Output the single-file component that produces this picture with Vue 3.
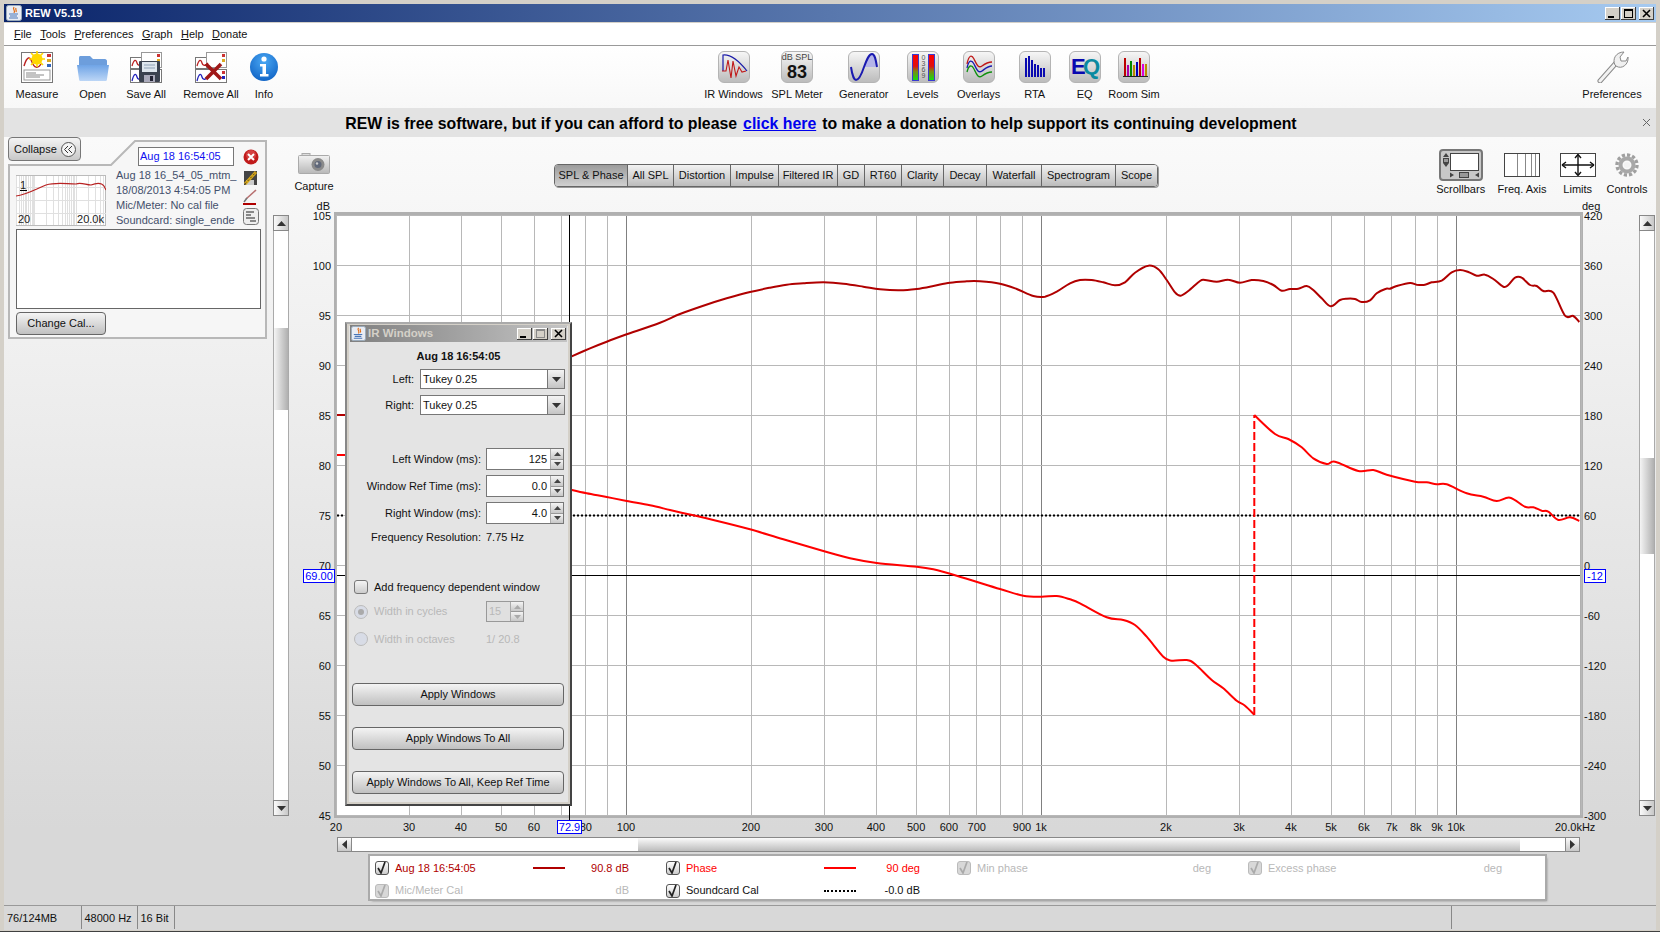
<script setup>
const log10 = Math.log10
const fx = f => 626 + 415 * log10(f / 100)
const snap = v => Math.floor(v + 0.2) + 0.5

const freqs = []
for (const d of [10, 100, 1000, 10000]) {
  for (let i = 1; i <= 9; i++) {
    const f = i * d
    if (f >= 20 && f <= 20000) freqs.push(f)
  }
}
freqs.push(20000)
const vLines = freqs.map(f => ({ x: snap(fx(f)), major: [100, 1000, 10000].includes(f) }))
const xLabels = [
  [20, '20'], [30, '30'], [40, '40'], [50, '50'], [60, '60'], [80, '80'], [100, '100'], [200, '200'], [300, '300'],
  [400, '400'], [500, '500'], [600, '600'], [700, '700'], [900, '900'], [1000, '1k'], [2000, '2k'], [3000, '3k'],
  [4000, '4k'], [5000, '5k'], [6000, '6k'], [7000, '7k'], [8000, '8k'], [9000, '9k'], [10000, '10k']
].map(([f, t]) => ({ x: fx(f), t }))

const yTicks = []
for (let i = 0; i <= 12; i++) {
  yTicks.push({ y: 215 + i * 50, db: 105 - i * 5, deg: 420 - i * 60 })
}

const z9 = (p) => p.map(([a, b]) => [570 + a / 3, 240 + b / 3])
const z10 = (p) => p.map(([a, b]) => [1080 + a / 3, 240 + b / 3])
const spl = z9([[5, 349], [60, 325], [110, 305], [170, 283], [270, 248], [330, 222], [400, 197], [470, 175], [540, 156], [600, 143], [650, 134], [700, 130], [760, 127], [820, 131], [880, 140], [930, 148], [990, 151], [1040, 147], [1090, 138], [1140, 128], [1190, 124], [1230, 124], [1290, 131], [1340, 147], [1390, 168], [1425, 170], [1460, 155], [1500, 130], [1530, 120]]).concat(
  z10([[35, 120], [70, 127], [105, 136], [135, 127], [165, 98], [205, 77], [235, 88], [260, 120], [285, 157], [302, 167], [325, 153], [360, 123], [375, 120], [410, 125], [445, 119], [480, 128], [515, 120], [550, 123], [580, 135], [605, 152], [630, 147], [655, 146], [680, 138], [700, 150], [725, 175], [752, 199], [780, 180], [800, 176], [825, 177], [845, 186], [870, 181], [890, 160], [918, 146], [930, 146], [950, 138], [990, 129], [1010, 134], [1035, 134], [1055, 127], [1085, 122], [1115, 97], [1140, 90], [1165, 96], [1190, 107], [1215, 104], [1240, 117], [1270, 140], [1285, 135], [1305, 113], [1325, 113], [1350, 135], [1370, 138], [1390, 153], [1420, 158], [1455, 227], [1480, 228], [1498, 246]])
)
const ph1 = z9([[5, 750], [50, 760], [110, 771], [170, 783], [240, 796], [300, 810], [370, 826], [430, 840], [540, 868], [640, 898], [760, 933], [840, 955], [920, 969], [1040, 980], [1090, 988], [1160, 1007], [1290, 1047], [1360, 1067], [1415, 1070], [1460, 1068], [1500, 1078]]).concat(
  z10([[0, 1090], [80, 1132], [130, 1140], [165, 1155], [200, 1190], [250, 1250], [275, 1262], [320, 1260], [345, 1272], [395, 1320], [430, 1345], [470, 1382], [495, 1397], [523, 1424]])
)
const ph2 = z10([[523, 525], [585, 582], [625, 597], [665, 622], [700, 655], [740, 672], [765, 665], [835, 693], [880, 690], [920, 704], [1005, 725], [1040, 727], [1070, 733], [1100, 733], [1160, 760], [1210, 770], [1250, 783], [1290, 773], [1335, 800], [1360, 802], [1385, 812], [1405, 815], [1435, 840], [1470, 832], [1498, 843]])

function smooth(p) {
  let d = `M${p[0][0].toFixed(1)} ${p[0][1].toFixed(1)}`
  for (let i = 0; i < p.length - 1; i++) {
    const a = p[Math.max(i - 1, 0)], b = p[i], c = p[i + 1], e = p[Math.min(i + 2, p.length - 1)]
    const c1x = b[0] + (c[0] - a[0]) / 6, c1y = b[1] + (c[1] - a[1]) / 6
    const c2x = c[0] - (e[0] - b[0]) / 6, c2y = c[1] - (e[1] - b[1]) / 6
    d += `C${c1x.toFixed(1)} ${c1y.toFixed(1)} ${c2x.toFixed(1)} ${c2y.toFixed(1)} ${c[0].toFixed(1)} ${c[1].toFixed(1)}`
  }
  return d
}
const splPath = smooth(spl)
const ph1Path = smooth(ph1)
const ph2Path = smooth(ph2)

const menus = [['F', 'ile'], ['T', 'ools'], ['P', 'references'], ['G', 'raph'], ['H', 'elp'], ['D', 'onate']]
const tabs = ['SPL & Phase', 'All SPL', 'Distortion', 'Impulse', 'Filtered IR', 'GD', 'RT60', 'Clarity', 'Decay', 'Waterfall', 'Spectrogram', 'Scope']

const thumbX = [0, 3, 5, 7, 9, 10, 12, 14, 16, 17, 18, 30, 37, 42, 46, 49, 51, 53, 55, 57, 58, 60, 72, 79, 84, 87].map(v => v + 0.5)
const thumbPath = 'M0 21C10 20 20 14 30 10C40 7 50 9 60 9C65 7 70 10 75 10C80 8 85 7 88 11L90 15'
const rtaBars = [[5, 6], [8, 4], [11, 8], [14, 12], [17, 13], [20, 16], [23, 16]]
const roomBars = [[5, 6, '#b00'], [8, 13, '#a0a'], [11, 9, '#080'], [14, 13, '#b80'], [17, 10, '#00b'], [20, 6, '#b00'], [23, 12, '#d0d'], [26, 12, '#b80']]
</script>

<template>
  <div class="app">
    <div class="titlebar">
      <svg class="java" width="16" height="16" viewBox="0 0 16 16">
        <rect x="0.5" y="0.5" width="15" height="15" rx="2" fill="#e8ecf4" stroke="#9ab"/>
        <path d="M8 2C6 5 10 5 8 8M10 3C9 5 11 5 10 7" fill="none" stroke="#e26a10" stroke-width="1.2"/>
        <path d="M3 9H12M4 11H11M3 13H12" stroke="#4a76b8" stroke-width="1.2"/>
      </svg>
      <span class="title-text">REW V5.19</span>
      <div class="winbtns">
        <span class="wb"><svg width="15" height="13" viewBox="0 0 15 13"><rect x="3" y="9" width="6" height="2" fill="#000"/></svg></span>
        <span class="wb"><svg width="15" height="13" viewBox="0 0 15 13"><rect x="3.5" y="2.5" width="8" height="8" fill="none" stroke="#000"/><rect x="3" y="2" width="9" height="2" fill="#000"/></svg></span>
        <span class="wb wb-x"><svg width="15" height="13" viewBox="0 0 15 13"><path d="M4 3L11 10M11 3L4 10" stroke="#000" stroke-width="1.6"/></svg></span>
      </div>
    </div>

    <div class="menubar">
      <span v-for="m in menus" :key="m[0]" class="menu"><span class="ul">{{ m[0] }}</span>{{ m[1] }}</span>
    </div>

    <div class="toolbar">
      <div class="tg tg-left">
        <div class="tool">
          <svg class="ic" width="34" height="32" viewBox="0 0 34 32">
            <rect x="1.5" y="1.5" width="31" height="30" fill="#fff" stroke="#777"/>
            <path d="M4 15C7 5 10 5 12 11S18 18 21 13" fill="none" stroke="#b22" stroke-width="1.4"/>
            <rect x="27" y="3" width="4" height="3" fill="#c33"/><rect x="27" y="8" width="4" height="3" fill="#da2"/><rect x="27" y="13" width="4" height="3" fill="#36b"/>
            <rect x="4" y="19" width="26" height="10" fill="#fff" stroke="#999"/>
            <path d="M6 22H16M6 24H24M6 26H20" stroke="#888" stroke-width="1"/>
            <circle cx="17" cy="8" r="5.5" fill="#ffd800"/>
            <path d="M17 0V16M9 8H25M11 2L23 14M23 2L11 14" stroke="#ffd800" stroke-width="1.6"/>
          </svg>
          <span>Measure</span>
        </div>
        <div class="tool">
          <svg class="ic" width="34" height="32" viewBox="0 0 34 32">
            <defs>
              <linearGradient id="fold" x1="0" y1="0" x2="0" y2="1"><stop offset="0" stop-color="#6fa4e6"/><stop offset="1" stop-color="#bcd6f6"/></linearGradient>
            </defs>
            <path d="M3 26V7C3 5 4 5 5 5H14L17 8H29C30 8 31 9 31 10V26Z" fill="#6d9edc"/>
            <path d="M1 14H33L31 28C31 30 30 30 29 30H5C4 30 3 30 3 28Z" fill="url(#fold)"/>
          </svg>
          <span>Open</span>
        </div>
        <div class="tool">
          <svg class="ic" width="34" height="32" viewBox="0 0 34 32">
            <rect x="1.5" y="6.5" width="18" height="11" fill="#fff" stroke="#777"/>
            <rect x="12.5" y="1.5" width="20" height="15" fill="#fff" stroke="#999"/>
            <rect x="1.5" y="18.5" width="31" height="13" fill="#fff" stroke="#777"/>
            <path d="M3 15C5 8 7 8 8 12S12 14 14 12" fill="none" stroke="#b22" stroke-width="1.3"/>
            <path d="M3 30C5 22 7 22 8 26S12 28 14 26" fill="none" stroke="#22b" stroke-width="1.3"/>
            <rect x="28" y="3" width="3" height="3" fill="#c33"/><rect x="28" y="8" width="3" height="3" fill="#da2"/>
            <rect x="10" y="10" width="21" height="21" rx="1" fill="#3b4250"/>
            <rect x="13" y="11" width="15" height="10" fill="#dfe6ee"/>
            <path d="M15 14H26M15 17H26" stroke="#8fa2b8"/>
            <rect x="15" y="24" width="11" height="7" fill="#aab"/><rect x="21" y="25" width="3" height="5" fill="#223"/>
          </svg>
          <span>Save All</span>
        </div>
        <div class="tool">
          <svg class="ic" width="34" height="32" viewBox="0 0 34 32">
            <rect x="1.5" y="6.5" width="18" height="11" fill="#fff" stroke="#777"/>
            <rect x="12.5" y="1.5" width="20" height="15" fill="#fff" stroke="#999"/>
            <rect x="1.5" y="18.5" width="31" height="13" fill="#fff" stroke="#777"/>
            <path d="M3 15C5 8 7 8 8 12S12 14 14 12" fill="none" stroke="#b22" stroke-width="1.3"/>
            <path d="M3 30C5 22 7 22 8 26S12 28 14 26" fill="none" stroke="#22b" stroke-width="1.3"/>
            <rect x="28" y="3" width="3" height="3" fill="#c33"/><rect x="28" y="8" width="3" height="3" fill="#da2"/>
            <rect x="28" y="20" width="3" height="3" fill="#c33"/><rect x="28" y="25" width="3" height="3" fill="#22b"/>
            <path d="M12 13L27 28M27 13L12 28" stroke="#a01818" stroke-width="3.6"/>
          </svg>
          <span>Remove All</span>
        </div>
        <div class="tool">
          <svg class="ic" width="28" height="32" viewBox="0 0 28 32">
            <defs>
              <radialGradient id="inf" cx="0.5" cy="0.3" r="0.8"><stop offset="0" stop-color="#4aa8f4"/><stop offset="1" stop-color="#0a5cc0"/></radialGradient>
            </defs>
            <circle cx="14" cy="16" r="14" fill="url(#inf)"/>
            <circle cx="14" cy="8" r="2.6" fill="#fff"/>
            <path d="M10 13H16V23H18.5V25.5H10V23H12.5V15.5H10Z" fill="#fff"/>
          </svg>
          <span>Info</span>
        </div>
      </div>

      <div class="tg tg-mid">
        <div class="tool">
          <span class="ib">
            <svg width="30" height="30" viewBox="0 0 30 30">
              <path d="M4 19V3C12 2 20 9 28 19" fill="none" stroke="#1a1aa8" stroke-width="1.2"/>
              <path d="M3 19H7L9 8L12 26L14 9L17 24L20 15L23 20L27 19" fill="none" stroke="#c01818" stroke-width="1.1"/>
            </svg>
          </span>
          <span>IR Windows</span>
        </div>
        <div class="tool">
          <span class="ib ib-col">
            <span class="spl-h">dB SPL</span>
            <span class="spl-v">83</span>
          </span>
          <span>SPL Meter</span>
        </div>
        <div class="tool">
          <span class="ib">
            <svg width="30" height="30" viewBox="0 0 30 30">
              <path d="M15 15C18 5 21 2 23 2C26 2 27 10 28 15Z" fill="#b4b4e8"/>
              <path d="M2 15C3 22 5 28 7 28C10 28 13 21 15 15C18 7 20 2 23 2C26 2 27 9 28 15" fill="none" stroke="#1a1ab0" stroke-width="2"/>
            </svg>
          </span>
          <span>Generator</span>
        </div>
        <div class="tool">
          <span class="ib">
            <svg width="30" height="30" viewBox="0 0 30 30">
              <defs>
                <linearGradient id="lv" x1="0" y1="0" x2="0" y2="1"><stop offset="0" stop-color="#f00"/><stop offset="0.45" stop-color="#e01010"/><stop offset="0.65" stop-color="#7a8a10"/><stop offset="1" stop-color="#10e010"/></linearGradient>
              </defs>
              <rect x="4.5" y="2.5" width="6" height="26" fill="url(#lv)" stroke="#3a3ad0"/>
              <rect x="20.5" y="2.5" width="6" height="26" fill="url(#lv)" stroke="#3a3ad0"/>
              <text x="15.5" y="8" class="lv-t">0</text><text x="15.5" y="14" class="lv-t">3</text><text x="15.5" y="20" class="lv-t">6</text><text x="15.5" y="26" class="lv-t">9</text>
            </svg>
          </span>
          <span>Levels</span>
        </div>
        <div class="tool">
          <span class="ib">
            <svg width="30" height="30" viewBox="0 0 30 30">
              <path d="M3 12C5 2 8 3 10 7S14 17 18 14S24 10 28 10" fill="none" stroke="#c01818" stroke-width="1.3"/>
              <path d="M3 16C5 7 8 8 10 12S14 22 18 19S24 14 28 14" fill="none" stroke="#1a1ab0" stroke-width="1.3"/>
              <path d="M3 20C5 12 8 13 10 17S14 27 18 24S24 20 28 20" fill="none" stroke="#109010" stroke-width="1.3"/>
            </svg>
          </span>
          <span>Overlays</span>
        </div>
        <div class="tool">
          <span class="ib">
            <svg width="30" height="30" viewBox="0 0 30 30">
              <rect v-for="b in rtaBars" :key="b[0]" :x="b[0]" :y="b[1]" width="2" :height="25 - b[1]" fill="#0a0ab0"/>
            </svg>
          </span>
          <span>RTA</span>
        </div>
        <div class="tool">
          <span class="ib">
            <svg width="30" height="30" viewBox="0 0 30 30">
              <text x="1" y="22" class="eq-e">E</text>
              <text x="13" y="22" class="eq-q">Q</text>
            </svg>
          </span>
          <span>EQ</span>
        </div>
        <div class="tool">
          <span class="ib">
            <svg width="30" height="30" viewBox="0 0 30 30">
              <rect v-for="b in roomBars" :key="b[0]" :x="b[0]" :y="b[1]" width="2" :height="25 - b[1]" :fill="b[2]"/>
              <path d="M4 24.5H29" stroke="#222" stroke-width="1"/>
            </svg>
          </span>
          <span>Room Sim</span>
        </div>
      </div>

      <div class="tool tool-pref">
        <svg class="ic" width="34" height="32" viewBox="0 0 34 32">
          <path d="M5 30L21 12" stroke="#8a8a8a" stroke-width="5" stroke-linecap="round"/>
          <path d="M5 30L21 12" stroke="#f2f2f2" stroke-width="3" stroke-linecap="round"/>
          <path d="M20 14C17 8 21 1 29 1L25 6L26 10L31 10L33 6C34 13 27 19 21 15Z" fill="#f0f0f0" stroke="#8a8a8a"/>
        </svg>
        <span>Preferences</span>
      </div>
    </div>

    <div class="banner">
      <span>REW is free software, but if you can afford to please</span>
      <a class="donate">click here</a>
      <span>to make a donation to help support its continuing development</span>
      <svg class="banner-x" width="9" height="9" viewBox="0 0 9 9"><path d="M1 1L8 8M8 1L1 8" stroke="#666"/></svg>
    </div>

    <div class="main">
      <div class="left">
        <button class="collapse">
          Collapse
          <svg width="15" height="15" viewBox="0 0 15 15"><circle cx="7.5" cy="7.5" r="7" fill="#f4f4f4" stroke="#555"/><path d="M7 4L3.5 7.5L7 11M11 4L7.5 7.5L11 11" fill="none" stroke="#333" stroke-width="1"/></svg>
        </button>
        <div class="panel">
          <svg class="panel-bg" width="262" height="202" viewBox="0 0 262 202">
            <path d="M1 26H103L127 2H258V199H1Z" fill="#f6f6f6" stroke="#b8b8b8" stroke-width="2"/>
          </svg>
          <div class="name-row">
            <div class="name-field">Aug 18 16:54:05</div>
            <svg class="side-ic" width="16" height="16" viewBox="0 0 16 16">
              <circle cx="8" cy="8" r="7.5" fill="#c01a1a"/>
              <circle cx="8" cy="6" r="5" fill="#e25a5a" opacity="0.6"/>
              <path d="M5 5L11 11M11 5L5 11" stroke="#fff" stroke-width="2"/>
            </svg>
          </div>
          <div class="meas-row">
            <svg class="thumb" width="90" height="51" viewBox="0 0 90 51">
              <rect x="0.5" y="0.5" width="89" height="50" fill="#fff" stroke="#bbb"/>
              <path v-for="x in thumbX" :key="x" :d="`M${x} 1V50`" stroke="#e0e0e0"/>
              <path d="M0 12.5H90M0 25.5H90M0 38.5H90" stroke="#e0e0e0"/>
              <path :d="thumbPath" fill="none" stroke="#b82222" stroke-width="1.2"/>
              <text x="4" y="14" class="th-t">1</text>
              <path d="M4 15.5H11" stroke="#000"/>
              <text x="2" y="48" class="th-t">20</text>
              <text x="88" y="48" class="th-t" text-anchor="end">20.0k</text>
            </svg>
            <div class="meas-info">
              <div>Aug 18 16_54_05_mtm_</div>
              <div>18/08/2013 4:54:05 PM</div>
              <div>Mic/Meter: No cal file</div>
              <div>Soundcard: single_ende</div>
            </div>
            <div class="side-col">
              <svg width="15" height="16" viewBox="0 0 15 16">
                <rect x="1" y="1" width="13" height="14" fill="#444"/>
                <rect x="3" y="10" width="8" height="5" fill="#ccc"/>
                <path d="M2 14L13 2" stroke="#d8a818" stroke-width="3"/>
                <path d="M2 14L13 2" stroke="#333" stroke-width="0.8" stroke-dasharray="2 2"/>
              </svg>
              <svg width="15" height="16" viewBox="0 0 15 16">
                <path d="M3 10L13 1" stroke="#b87070" stroke-width="1.6"/>
                <path d="M1 13L4 9" stroke="#777" stroke-width="1.6"/>
                <rect x="0" y="14" width="13" height="2" fill="#b00000"/>
              </svg>
              <svg width="16" height="17" viewBox="0 0 16 17">
                <rect x="0.5" y="0.5" width="15" height="16" rx="3" fill="#eee" stroke="#777"/>
                <path d="M3 4H11M3 7H8M3 10H12M7 13H13" stroke="#222" stroke-width="1.1"/>
              </svg>
            </div>
          </div>
          <div class="notes"></div>
          <button class="btn btn-cal">Change Cal...</button>
        </div>
      </div>

      <div class="graph">
        <div class="graph-tools">
          <div class="gt gt-cap">
            <svg width="32" height="22" viewBox="0 0 32 22">
              <defs>
                <linearGradient id="cam" x1="0" y1="0" x2="0" y2="1"><stop offset="0" stop-color="#f2f2f2"/><stop offset="1" stop-color="#b8b8b8"/></linearGradient>
              </defs>
              <rect x="4" y="0.5" width="8" height="3" fill="#ddd" stroke="#aaa"/>
              <rect x="0.5" y="2.5" width="31" height="18" rx="1" fill="url(#cam)" stroke="#aaa"/>
              <circle cx="20" cy="11.5" r="6.5" fill="#8a8a8a"/>
              <circle cx="20" cy="11.5" r="3.5" fill="#60687a"/>
              <circle cx="19" cy="10.5" r="1.2" fill="#ccc"/>
            </svg>
            <span>Capture</span>
          </div>
          <div class="tabs">
            <span v-for="(t, i) in tabs" :key="t" class="tab" :class="['t' + i, { sel: i === 0 }]">{{ t }}</span>
          </div>
          <div class="gt-right">
            <div class="gt">
              <span class="gt-ic">
                <svg width="44" height="32" viewBox="0 0 44 32">
                  <rect x="1" y="1" width="42" height="30" rx="3" fill="#c8c8c8" stroke="#777" stroke-width="2"/>
                  <rect x="11.5" y="4.5" width="28" height="17" fill="#fff" stroke="#444"/>
                  <path d="M7 4L4 8H10ZM7 18L4 14H10Z" fill="#444"/>
                  <rect x="4.5" y="9.5" width="5" height="4" fill="#999" stroke="#444"/>
                  <path d="M15 26L11 23.5V28.500ZM36 26L40 23.500V28.500Z" fill="#444"/>
                  <rect x="20.500" y="23.500" width="9" height="5" fill="#999" stroke="#444"/>
                </svg>
              </span>
              <span>Scrollbars</span>
            </div>
            <div class="gt">
              <span class="gt-ic">
                <svg width="36" height="24" viewBox="0 0 36 24">
                  <rect x="0.5" y="0.5" width="35" height="23" fill="#fff" stroke="#444"/>
                  <path d="M13.500 1V23M21.500 1V23M27.500 1V23M31.500 1V23" stroke="#888"/>
                </svg>
              </span>
              <span>Freq. Axis</span>
            </div>
            <div class="gt">
              <span class="gt-ic">
                <svg width="36" height="24" viewBox="0 0 36 24">
                  <rect x="0.5" y="0.5" width="35" height="23" fill="#fff" stroke="#444"/>
                  <path d="M2 12H34M18 1.500V22.500" stroke="#111" stroke-width="1.4"/>
                  <path d="M2 12L6 9M2 12L6 15M34 12L30 9M34 12L30 15M18 1.500L15 5M18 1.500L21 5M18 22.500L15 19M18 22.500L21 19" stroke="#111" stroke-width="1.4" fill="none"/>
                </svg>
              </span>
              <span>Limits</span>
            </div>
            <div class="gt">
              <span class="gt-ic">
                <svg width="24" height="24" viewBox="0 0 24 24">
                  <circle cx="12" cy="12" r="10" fill="none" stroke="#a0a0a0" stroke-width="3.4" stroke-dasharray="3.2 2"/>
                  <circle cx="12" cy="12" r="6.500" fill="none" stroke="#a8a8a8" stroke-width="4"/>
                  <circle cx="12" cy="12" r="3" fill="#f2f2f2"/>
                </svg>
              </span>
              <span>Controls</span>
            </div>
          </div>
        </div>

        <div class="chart-row">
          <div class="vscroll vs-left">
            <span class="sb-btn"><svg width="9" height="5" viewBox="0 0 9 5"><path d="M0 5L4.500 0L9 5Z" fill="#333"/></svg></span>
            <span class="vs-track"><span class="vs-thumb"></span></span>
            <span class="sb-btn"><svg width="9" height="5" viewBox="0 0 9 5"><path d="M0 0L4.500 5L9 0Z" fill="#333"/></svg></span>
          </div>
          <svg class="chart" width="1347" height="636" viewBox="290 200 1347 636">
            <rect x="335.500" y="213.500" width="1246" height="603" fill="#fff" stroke="#b0b0b0" stroke-width="3"/>
            <path v-for="v in vLines" :key="v.x" :d="`M${v.x} 215V815`" :stroke="v.major ? '#808080' : '#b8b8b8'"/>
            <path v-for="t in yTicks" :key="t.y" :d="`M337 ${t.y + 0.5}H1580`" stroke="#b8b8b8"/>
            <path d="M337 515.500H1580" stroke="#000" stroke-width="2" stroke-dasharray="2 2"/>
            <path d="M337 575.500H1580" stroke="#000"/>
            <path d="M337 415H346" stroke="#b00000" stroke-width="2"/>
            <path d="M337 455H346" stroke="#ff0000" stroke-width="2"/>
            <path :d="splPath" fill="none" stroke="#b00000" stroke-width="2"/>
            <path :d="ph1Path" fill="none" stroke="#ff0000" stroke-width="2"/>
            <path :d="ph2Path" fill="none" stroke="#ff0000" stroke-width="2"/>
            <path d="M1254.300 715V415" stroke="#ff0000" stroke-width="2" stroke-dasharray="8 3"/>
            <path d="M569.500 215V821" stroke="#000"/>
            <text x="330" y="210" class="ct" text-anchor="end">dB</text>
            <text x="1582" y="210" class="ct">deg</text>
            <template v-for="t in yTicks" :key="t.y">
              <text x="331" :y="t.y + 5" class="ct" text-anchor="end">{{ t.db }}</text>
              <text x="1584" :y="t.y + 5" class="ct">{{ t.deg }}</text>
            </template>
            <text v-for="l in xLabels" :key="l.t" :x="l.x" y="831" class="ct" text-anchor="middle">{{ l.t }}</text>
            <text x="1555" y="831" class="ct">20.0kHz</text>
            <rect x="303.500" y="569.500" width="31" height="13" fill="#fff" stroke="#0000ff"/>
            <text x="319" y="580" class="ct blue" text-anchor="middle">69.00</text>
            <rect x="1584.500" y="569.500" width="21" height="13" fill="#fff" stroke="#0000ff"/>
            <text x="1595" y="580" class="ct blue" text-anchor="middle">-12</text>
            <rect x="557.500" y="820.500" width="24" height="13" fill="#fff" stroke="#0000ff"/>
            <text x="569.500" y="831" class="ct blue" text-anchor="middle">72.9</text>
          </svg>
          <div class="vscroll vs-right">
            <span class="sb-btn"><svg width="9" height="5" viewBox="0 0 9 5"><path d="M0 5L4.500 0L9 5Z" fill="#333"/></svg></span>
            <span class="vs-track"><span class="vs-thumb"></span></span>
            <span class="sb-btn"><svg width="9" height="5" viewBox="0 0 9 5"><path d="M0 0L4.500 5L9 0Z" fill="#333"/></svg></span>
          </div>
        </div>

        <div class="hscroll">
          <span class="sb-btn"><svg width="5" height="9" viewBox="0 0 5 9"><path d="M5 0L0 4.500L5 9Z" fill="#333"/></svg></span>
          <span class="hs-track"><span class="hs-thumb"></span></span>
          <span class="sb-btn"><svg width="5" height="9" viewBox="0 0 5 9"><path d="M0 0L5 4.500L0 9Z" fill="#333"/></svg></span>
        </div>

        <div class="legend">
          <div class="lg on dark">
            <span class="cb"><svg width="12" height="12" viewBox="0 0 12 12"><path d="M2 6L5 11L9 0" fill="none" stroke="#222" stroke-width="1.7"/></svg></span>
            <span class="lg-name">Aug 18 16:54:05</span><span class="sw sw-dark"></span><span class="lg-val">90.8 dB</span>
          </div>
          <div class="lg on bright">
            <span class="cb"><svg width="12" height="12" viewBox="0 0 12 12"><path d="M2 6L5 11L9 0" fill="none" stroke="#222" stroke-width="1.7"/></svg></span>
            <span class="lg-name">Phase</span><span class="sw sw-bright"></span><span class="lg-val">90 deg</span>
          </div>
          <div class="lg off">
            <span class="cb"><svg width="12" height="12" viewBox="0 0 12 12"><path d="M2 6L5 11L9 0" fill="none" stroke="#aaa" stroke-width="1.7"/></svg></span>
            <span class="lg-name">Min phase</span><span class="sw"></span><span class="lg-val">deg</span>
          </div>
          <div class="lg off">
            <span class="cb"><svg width="12" height="12" viewBox="0 0 12 12"><path d="M2 6L5 11L9 0" fill="none" stroke="#aaa" stroke-width="1.7"/></svg></span>
            <span class="lg-name">Excess phase</span><span class="sw"></span><span class="lg-val">deg</span>
          </div>
          <div class="lg off">
            <span class="cb"><svg width="12" height="12" viewBox="0 0 12 12"><path d="M2 6L5 11L9 0" fill="none" stroke="#aaa" stroke-width="1.7"/></svg></span>
            <span class="lg-name">Mic/Meter Cal</span><span class="sw"></span><span class="lg-val">dB</span>
          </div>
          <div class="lg on">
            <span class="cb"><svg width="12" height="12" viewBox="0 0 12 12"><path d="M2 6L5 11L9 0" fill="none" stroke="#222" stroke-width="1.7"/></svg></span>
            <span class="lg-name">Soundcard Cal</span><span class="sw sw-dot"></span><span class="lg-val">-0.0 dB</span>
          </div>
        </div>

        <div class="dlg">
          <div class="dlg-title">
            <svg width="15" height="15" viewBox="0 0 16 16">
              <rect x="0.5" y="0.5" width="15" height="15" rx="2" fill="#e8ecf4" stroke="#9ab"/>
              <path d="M8 2C6 5 10 5 8 8M10 3C9 5 11 5 10 7" fill="none" stroke="#e26a10" stroke-width="1.2"/>
              <path d="M3 9H12M4 11H11M3 13H12" stroke="#4a76b8" stroke-width="1.2"/>
            </svg>
            <span>IR Windows</span>
            <div class="dlg-btns">
              <span class="wb"><svg width="15" height="12" viewBox="0 0 15 12"><rect x="3" y="8" width="6" height="2" fill="#000"/></svg></span>
              <span class="wb"><svg width="15" height="12" viewBox="0 0 15 12"><rect x="3.500" y="1.500" width="8" height="8" fill="none" stroke="#888"/><rect x="3" y="1" width="9" height="2" fill="#888"/></svg></span>
              <span class="wb wb-x"><svg width="15" height="12" viewBox="0 0 15 12"><path d="M4 2L11 9M11 2L4 9" stroke="#000" stroke-width="1.6"/></svg></span>
            </div>
          </div>
          <div class="dlg-head">Aug 18 16:54:05</div>
          <div class="combo-row row-l">
            <label>Left:</label>
            <div class="combo"><span class="combo-v">Tukey 0.25</span><span class="combo-b"><svg width="9" height="5" viewBox="0 0 9 5"><path d="M0 0L4.500 5L9 0Z" fill="#333"/></svg></span></div>
          </div>
          <div class="combo-row row-r">
            <label>Right:</label>
            <div class="combo"><span class="combo-v">Tukey 0.25</span><span class="combo-b"><svg width="9" height="5" viewBox="0 0 9 5"><path d="M0 0L4.500 5L9 0Z" fill="#333"/></svg></span></div>
          </div>
          <div class="spin-row spin-first">
            <label>Left Window (ms):</label>
            <div class="spin"><span class="spin-v">125</span><span class="spin-b"><i><svg width="7" height="4" viewBox="0 0 7 4"><path d="M0 4L3.500 0L7 4Z" fill="#444"/></svg></i><i><svg width="7" height="4" viewBox="0 0 7 4"><path d="M0 0L3.500 4L7 0Z" fill="#444"/></svg></i></span></div>
          </div>
          <div class="spin-row">
            <label>Window Ref Time (ms):</label>
            <div class="spin"><span class="spin-v">0.0</span><span class="spin-b"><i><svg width="7" height="4" viewBox="0 0 7 4"><path d="M0 4L3.500 0L7 4Z" fill="#444"/></svg></i><i><svg width="7" height="4" viewBox="0 0 7 4"><path d="M0 0L3.500 4L7 0Z" fill="#444"/></svg></i></span></div>
          </div>
          <div class="spin-row">
            <label>Right Window (ms):</label>
            <div class="spin"><span class="spin-v">4.0</span><span class="spin-b"><i><svg width="7" height="4" viewBox="0 0 7 4"><path d="M0 4L3.500 0L7 4Z" fill="#444"/></svg></i><i><svg width="7" height="4" viewBox="0 0 7 4"><path d="M0 0L3.500 4L7 0Z" fill="#444"/></svg></i></span></div>
          </div>
          <div class="res-row">
            <label>Frequency Resolution:</label><span>7.75 Hz</span>
          </div>
          <div class="opt-row opt-check">
            <span class="box"></span><span>Add frequency dependent window</span>
          </div>
          <div class="opt-row opt-cycles dis">
            <span class="radio sel"></span><span class="opt-l">Width in cycles</span>
            <div class="spin spin-dis"><span class="spin-v">15</span><span class="spin-b"><i><svg width="7" height="4" viewBox="0 0 7 4"><path d="M0 4L3.500 0L7 4Z" fill="#aaa"/></svg></i><i><svg width="7" height="4" viewBox="0 0 7 4"><path d="M0 0L3.500 4L7 0Z" fill="#aaa"/></svg></i></span></div>
          </div>
          <div class="opt-row opt-oct dis">
            <span class="radio"></span><span class="opt-l">Width in octaves</span><span>1/ 20.8</span>
          </div>
          <button class="btn dlg-btn b1">Apply Windows</button>
          <button class="btn dlg-btn b2">Apply Windows To All</button>
          <button class="btn dlg-btn b2">Apply Windows To All, Keep Ref Time</button>
        </div>
      </div>
    </div>

    <div class="status">
      <span class="st st1">76/124MB</span>
      <span class="st st2">48000 Hz</span>
      <span class="st st3">16 Bit</span>
      <span class="st st4"></span>
      <span class="st st5"></span>
    </div>
  </div>
</template>

<style scoped>
.app {
  width: 1660px; height: 932px; box-sizing: border-box;
  padding: 4px 4px 2px 4px;
  display: flex; flex-direction: column;
  background: #d4d0c8;
  border-bottom: 1px solid #404040;
  font: 11px/13px "Liberation Sans", Arial, sans-serif;
  color: #111;
  overflow: hidden;
}
.titlebar {
  height: 18px; flex: none; display: flex; align-items: center;
  background: linear-gradient(90deg, #0a246a, #a6caf0);
  padding-left: 2px; margin-bottom: 1px;
}
.java { flex: none; }
.title-text { color: #fff; font-weight: 700; font-size: 11px; margin-left: 3px; }
.winbtns { margin-left: auto; display: flex; margin-right: 2px; }
.wb {
  display: block; width: 15px; height: 13px; line-height: 0; box-sizing: border-box;
  background: #d4d0c8; box-shadow: inset -1px -1px 0 #404040, inset 1px 1px 0 #fff;
  margin-left: 1px;
}
.wb-x { margin-left: 3px; }
.menubar {
  height: 22px; flex: none; background: #fff; display: flex; align-items: center;
  padding-left: 10px; gap: 8.4px; border-bottom: 1px solid #9a9a9a;
}
.ul { text-decoration: underline; }
.toolbar {
  height: 62px; flex: none; display: flex; position: relative;
  background: linear-gradient(#fff, #f8f8f8);
}
.tg { display: grid; padding-top: 5px; }
.tool { display: flex; flex-direction: column; align-items: center; white-space: nowrap; }
.tg-left { grid-template-columns: 58px 53.5px 53px 77px 29px; padding-left: 4px; width: 696px; box-sizing: border-box; }
.tg-mid { grid-template-columns: 67px 60px 73.4px 44.6px 67.4px 44.6px 55.4px 43.2px; }
.ic { height: 32px; display: block; margin-bottom: 5px; }
.ib {
  box-sizing: border-box; width: 32px; height: 32px; margin-bottom: 5px; border-radius: 6px;
  border: 1px solid #b4b4b4; background: linear-gradient(#f6f6f6, #bcbcbc);
  display: flex; align-items: center; justify-content: center; line-height: 0;
}
.ib-col { flex-direction: column; line-height: 1; }
.spl-h { font-size: 9px; color: #444; height: 9px; line-height: 9px; margin-bottom: 2px; }
.spl-v { font-size: 18px; font-weight: 700; color: #111; height: 17px; line-height: 17px; }
.lv-t { font: 7px "Liberation Sans", sans-serif; fill: #555; text-anchor: middle; }
.eq-e { font: 700 22px "Liberation Sans", sans-serif; fill: #0808b0; }
.eq-q { font: 700 22px "Liberation Sans", sans-serif; fill: #0a8aa0; }
.tool-pref { position: absolute; right: 0; top: 5px; width: 88px; }
.banner {
  height: 29px; flex: none; background: #e3e3e3; position: relative;
  display: flex; align-items: center; justify-content: center; gap: 6px;
  font-weight: 700; font-size: 15.85px; color: #000; padding: 1px 18px 0 0; box-sizing: border-box;
}
.donate { color: #0000ee; text-decoration: underline; }
.banner-x { position: absolute; right: 5px; top: 10px; }
.main { height: 768px; flex: none; display: flex; background: linear-gradient(#fafafa, #d8d8d8 90%); }
.left { width: 266px; flex: none; position: relative; padding: 3px 0 0 4px; box-sizing: border-box; }
.collapse {
  position: absolute; left: 4px; top: 0; z-index: 2;
  width: 73px; height: 24px; box-sizing: border-box; padding: 1px 0 0 5px;
  display: flex; align-items: center; gap: 4px;
  font: inherit; color: #111; border: 1px solid #777; border-radius: 4px;
  background: linear-gradient(#f4f4f4, #c8c8c8);
}
.panel {
  position: relative; width: 260px; height: 200px; box-sizing: border-box; padding: 7px 7px 0 8px;
}
.panel-bg { position: absolute; left: 0; top: -1px; }
.name-row { position: relative; display: flex; justify-content: flex-end; align-items: center; gap: 9px; height: 19px; margin-right: 2px; }
.name-field {
  width: 96px; height: 19px; box-sizing: border-box; border: 1px solid #777; background: #fff;
  color: #1010f0; line-height: 17px; padding-left: 1px; white-space: nowrap; overflow: hidden;
}
.meas-row { position: relative; display: flex; margin-top: 9px; height: 52px; }
.thumb { flex: none; display: block; }
.th-t { font: 11px "Liberation Sans", sans-serif; fill: #222; }
.meas-info {
  width: 118px; margin-left: 10px; white-space: nowrap; color: #44506c;
  line-height: 15px; margin-top: -7px; flex: none; height: 60px;
}
.side-col { display: flex; flex-direction: column; gap: 3px; margin-left: 9px; margin-top: -5px; line-height: 0; }
.notes { position: relative; width: 245px; height: 80px; box-sizing: border-box; border: 1px solid #666; background: #fff; margin-top: 2px; }
.btn {
  box-sizing: border-box; border: 1px solid #666; border-radius: 4px; padding: 0;
  background: linear-gradient(#f4f4f4, #c0c0c0);
  font: inherit; color: #111; display: block; text-align: center;
}
.btn-cal { position: relative; width: 90px; height: 23px; margin-top: 3px; }
.graph { flex: 1; position: relative; display: flex; flex-direction: column; min-width: 0; }
.graph-tools { height: 63px; flex: none; display: flex; align-items: flex-start; }
.gt { display: flex; flex-direction: column; align-items: center; white-space: nowrap; }
.gt-cap { width: 70px; margin-left: 9px; margin-top: 16px; }
.gt-cap svg { margin-bottom: 5px; display: block; }
.tabs {
  margin-left: 205px; margin-top: 27px; display: flex; height: 23px; box-sizing: border-box;
  border: 1px solid #666; border-radius: 4px; box-shadow: 1px 1px 0 #999; overflow: hidden;
}
.tab {
  box-sizing: border-box; text-align: center; line-height: 21px; border-right: 1px solid #666;
  background: linear-gradient(#f2f2f2, #bcbcbc);
  white-space: nowrap;
}
.tab:last-child { border-right: 0; }
.tab.sel { background: linear-gradient(#9c9c9c, #d0d0d0); }
.t0 { width: 73px; } .t1 { width: 46px; } .t2 { width: 57px; } .t3 { width: 48px; } .t4 { width: 59px; } .t5 { width: 27px; }
.t6 { width: 37px; } .t7 { width: 42px; } .t8 { width: 43px; } .t9 { width: 55px; } .t10 { width: 74px; } .t11 { width: 41px; }
.gt-right { margin-left: auto; display: grid; grid-template-columns: 63.8px 58.8px 52.6px 46px; padding-right: 6px; margin-top: 11px; }
.gt-ic { height: 34px; display: flex; align-items: center; justify-content: center; margin-bottom: 1px; }
.chart-row { height: 636px; flex: none; display: flex; padding-left: 3px; gap: 1px; }
.chart { display: block; flex: none; }
.ct { font: 11px "Liberation Sans", Arial, sans-serif; fill: #111; }
.blue { fill: #0000ff; }
.vscroll {
  width: 16px; height: 601px; margin-top: 15px; flex: none; display: flex; flex-direction: column;
}
.sb-btn {
  flex: none; box-sizing: border-box; display: flex; align-items: center; justify-content: center;
  width: 16px; height: 16px; background: linear-gradient(90deg, #fafafa, #c8c8c8); border: 1px solid #888;
}
.vs-track { flex: 1; background: #fff; border-left: 1px solid #aaa; border-right: 1px solid #aaa; display: flex; flex-direction: column; }
.vs-thumb { display: block; background: linear-gradient(90deg, #f4f4f4, #b0b0b0); }
.vs-left .vs-track { padding-top: 97px; }
.vs-left .vs-thumb { height: 82px; }
.vs-right .vs-track { padding-top: 227px; }
.vs-right .vs-thumb { height: 96px; }
.vs-right { margin-left: 1px; }
.hscroll { height: 15px; width: 1243px; margin: 1px 0 0 67px; flex: none; display: flex; }
.hscroll .sb-btn { height: 15px; width: 15px; background: linear-gradient(#fafafa, #c8c8c8); }
.hs-track { flex: 1; background: #fff; border-top: 1px solid #888; border-bottom: 1px solid #888; padding-left: 286px; padding-right: 45px; display: flex; }
.hs-thumb { flex: 1; display: block; background: linear-gradient(#fbfbfb, #bcbcbc); }
.legend {
  width: 1175px; height: 43px; margin: 4px 0 0 100px; box-sizing: border-box; flex: none;
  background: #fff; box-shadow: 0 0 0 2px #aaa, 2px 2px 2px #888;
  display: grid; grid-template-columns: repeat(4, 291px); grid-template-rows: 24px 21px; padding-left: 5px;
}
.lg { display: flex; align-items: center; white-space: nowrap; }
.cb {
  box-sizing: border-box; width: 14px; height: 14px; flex: none; border: 1px solid #555; border-radius: 3px;
  background: linear-gradient(#fff, #ccc); line-height: 0; margin-right: 6px;
}
.lg-name { width: 138px; flex: none; }
.sw { width: 32px; height: 0; flex: none; }
.sw-dark { border-top: 2px solid #b00000; }
.sw-bright { border-top: 2px solid #ff0000; }
.sw-dot { border-top: 2px dotted #000; }
.lg-val { width: 64px; text-align: right; flex: none; }
.dark { color: #b00000; }
.bright { color: #ff0000; }
.off { color: #b8b8b8; }
.off .cb { border-color: #bbb; background: #d8d8d8; }
.dlg {
  position: absolute; left: 75px; top: 185px; width: 227px; height: 484px; box-sizing: border-box; z-index: 5;
  background: #e4e4e4; border: 2px solid; border-color: #aaa #444 #444 #888;
  box-shadow: inset 2px 2px 0 #d4d0c8, inset -2px -2px 0 #d4d0c8;
  padding: 1px 3px 0 3px;
}
.dlg-title {
  height: 17px; display: flex; align-items: center; gap: 2px; padding-left: 1px;
  background: linear-gradient(90deg, #808080, #c4c4c4); color: #d4d0c8; font-weight: 700; font-size: 11.5px;
}
.dlg-btns { margin-left: auto; display: flex; margin-right: 1px; }
.dlg-btns .wb { height: 12px; }
.dlg-head { text-align: center; font-weight: 700; height: 14px; line-height: 14px; margin: 7px 0 0 0; }
.combo-row { display: flex; align-items: center; }
.row-l { margin-top: 6px; }
.row-r { margin-top: 6px; }
.combo-row label { width: 64px; text-align: right; flex: none; margin-right: 6px; }
.combo { box-sizing: border-box; width: 145px; height: 20px; border: 1px solid #777; background: #fff; display: flex; }
.combo-v { flex: 1; line-height: 18px; padding-left: 2px; }
.combo-b { width: 16px; border-left: 1px solid #777; background: linear-gradient(#f4f4f4, #c4c4c4); display: flex; align-items: center; justify-content: center; }
.spin-row { display: flex; align-items: center; margin-top: 5px; }
.spin-first { margin-top: 33px; }
.spin-row label { width: 131px; text-align: right; flex: none; margin-right: 5px; white-space: nowrap; }
.spin { box-sizing: border-box; width: 78px; height: 22px; border: 1px solid #777; background: #fff; display: flex; }
.spin-v { flex: 1; text-align: right; line-height: 20px; padding-right: 3px; }
.spin-b { width: 12px; border-left: 1px solid #aaa; display: flex; flex-direction: column; }
.spin-b i {
  flex: 1; display: flex; align-items: center; justify-content: center;
  background: linear-gradient(#f4f4f4, #c8c8c8);
}
.spin-b i + i { border-top: 1px solid #999; }
.res-row { display: flex; margin-top: 7px; height: 13px; }
.res-row label { width: 131px; text-align: right; margin-right: 5px; white-space: nowrap; flex: none; }
.opt-row { display: flex; align-items: center; padding-left: 4px; white-space: nowrap; }
.opt-check { margin-top: 36px; height: 14px; }
.box { box-sizing: border-box; width: 14px; height: 14px; border: 1px solid #777; border-radius: 3px; background: linear-gradient(#f4f4f4, #ccc); margin-right: 6px; flex: none; }
.radio { box-sizing: border-box; width: 14px; height: 14px; border: 1px solid #bbb; border-radius: 50%; background: #d8dce6; margin-right: 6px; flex: none; position: relative; }
.radio.sel::after { content: ""; position: absolute; left: 3px; top: 3px; width: 6px; height: 6px; border-radius: 50%; background: #aaa; }
.opt-cycles { margin-top: 7px; height: 21px; }
.opt-oct { margin-top: 10px; height: 14px; }
.opt-l { width: 112px; flex: none; }
.dis { color: #b8b8b8; }
.spin-dis { width: 38px; height: 21px; border-color: #999; background: #e0e0e0; }
.spin-dis .spin-v { text-align: left; padding: 0 0 0 2px; line-height: 19px; }
.dlg-btn { width: 212px; height: 23px; margin-left: 2px; }
.b1 { margin-top: 37px; }
.b2 { margin-top: 21px; }
.status { height: 25px; flex: none; display: flex; box-sizing: border-box; border-top: 1px solid #999; background: #d8d8d8; }
.st { box-sizing: border-box; padding-left: 3px; line-height: 25px; border-right: 1px solid #888; white-space: nowrap; height: 23px; }
.st1 { width: 77.5px; } .st2 { width: 56px; } .st3 { width: 37.5px; } .st4 { width: 1277px; } .st5 { flex: 1; border-right: 0; }
</style>

<style>
html, body { margin: 0; padding: 0; }
</style>
